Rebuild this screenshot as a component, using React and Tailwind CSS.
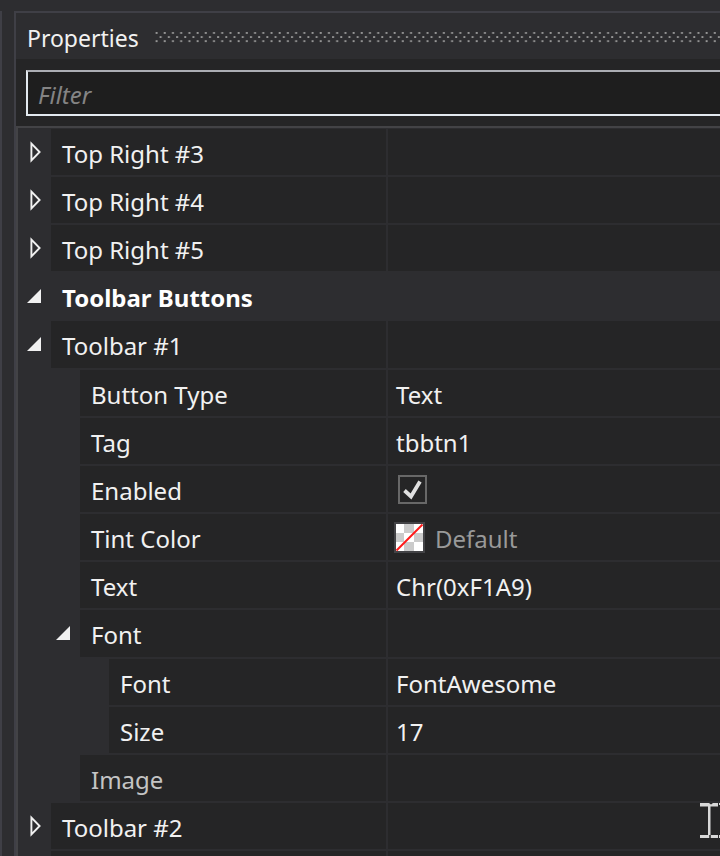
import React, { useState } from "react";
import clsx from "clsx";

const rows = [
  { id: "tr3", label: "Top Right #3", level: 0, state: "closed" },
  { id: "tr4", label: "Top Right #4", level: 0, state: "closed" },
  { id: "tr5", label: "Top Right #5", level: 0, state: "closed" },
  { id: "buttons", label: "Toolbar Buttons", level: 0, state: "open", group: true },
  { id: "tb1", label: "Toolbar #1", level: 0, state: "open" },
  { id: "type", label: "Button Type", level: 1, value: "Text" },
  { id: "tag", label: "Tag", level: 1, value: "tbbtn1" },
  { id: "enabled", label: "Enabled", level: 1, kind: "check" },
  { id: "tint", label: "Tint Color", level: 1, kind: "color", value: "Default" },
  { id: "text", label: "Text", level: 1, value: "Chr(0xF1A9)" },
  { id: "font", label: "Font", level: 1, state: "open" },
  { id: "family", label: "Font", level: 2, value: "FontAwesome" },
  { id: "size", label: "Size", level: 2, value: "17" },
  { id: "image", label: "Image", level: 1, muted: true },
  { id: "tb2", label: "Toolbar #2", level: 0, state: "closed" },
  { id: "tb3", label: "", level: 0 },
];

// width of the gutter in front of the label, one per tree level
const gutters = ["w-[33px]", "w-[62px]", "w-[91px]"];

const Arrow = ({ open }) =>
  open ? (
    <svg width="14" height="14" viewBox="0 0 14 14">
      <path d="M14 0V14H0Z" fill="#f1f1f1" />
    </svg>
  ) : (
    <svg width="14" height="22" viewBox="0 0 14 22">
      <path d="M4.4 2.6V19.4L12.6 11Z" fill="none" stroke="#f1f1f1" strokeWidth="1.9" />
    </svg>
  );

const Grip = () => (
  <svg className="h-3 min-w-0 flex-1" aria-hidden="true">
    <defs>
      <pattern id="grip" width="8.21" height="12" patternUnits="userSpaceOnUse">
        <rect x="0.6" y="0" width="1.9" height="1.9" fill="#999" />
        <rect x="4.7" y="4.1" width="1.9" height="1.9" fill="#999" />
        <rect x="0.6" y="8.2" width="1.9" height="1.9" fill="#999" />
      </pattern>
    </defs>
    <rect width="100%" height="12" fill="url(#grip)" />
  </svg>
);

const Swatch = () => (
  <svg width="31" height="31" viewBox="0 0 31 31" aria-hidden="true">
    <rect width="31" height="31" fill="#434346" />
    <rect x="2" y="2" width="27" height="27" fill="#fff" />
    <path d="M10 2h10v9H10zM2 11h8v9H2zM20 11h9v9h-9zM10 20h10v9H10z" fill="#cbcbcb" />
    <path d="M2.5 28.5L28.5 2.5" stroke="#ff1a1a" strokeWidth="2" />
  </svg>
);

const CheckBox = ({ id }) => {
  const [checked, setChecked] = useState(true);
  return (
    <span className="ml-0.5 grid">
      <input
        id={id}
        type="checkbox"
        checked={checked}
        onChange={(e) => setChecked(e.target.checked)}
        className="col-start-1 row-start-1 size-[29px] appearance-none border-2 border-[#686868] bg-[#252526]"
      />
      {checked && (
        <svg
          width="29"
          height="29"
          viewBox="0 0 29 29"
          className="pointer-events-none col-start-1 row-start-1"
        >
          <path d="M6.5 15.5L13 21.5L22 6.5" fill="none" stroke="#e0e0e0" strokeWidth="3.8" />
        </svg>
      )}
    </span>
  );
};

const Value = ({ row }) => {
  if (row.kind === "check") return <CheckBox id={row.id} />;
  if (row.kind === "color")
    return (
      <span className="flex items-center gap-2.5 text-[#999]">
        <span className="-ml-0.5">
          <Swatch />
        </span>
        <span className="pt-1">{row.value}</span>
      </span>
    );
  return <span>{row.value}</span>;
};

const Row = ({ row }) => {
  const Label = row.kind === "check" ? "label" : "span";
  const open = row.state === "open";
  return (
    <div role="row" className={clsx("flex", open && !row.group ? "h-[49px]" : "h-12")}>
      <div role="rowheader" className="flex w-[370px] shrink-0">
        <div className={clsx("flex shrink-0 justify-end pr-2.5", gutters[row.level])}>
          {row.state && (
            <button
              type="button"
              aria-label={row.label}
              aria-expanded={open}
              className={clsx("flex w-3.5 items-start", open ? "pt-4" : "pt-3")}
            >
              <Arrow open={open} />
            </button>
          )}
        </div>
        <div
          className={clsx(
            "flex min-w-0 flex-1 items-center border-b-2 border-[#2d2d30] pt-[3px] pl-[11px] whitespace-nowrap",
            row.group ? "font-bold text-white" : "border-r-2 bg-[#252526]",
            row.muted && "text-[#c4c4c4]"
          )}
        >
          <Label htmlFor={row.kind === "check" ? row.id : undefined}>{row.label}</Label>
        </div>
      </div>
      <div
        role="gridcell"
        className={clsx(
          "flex min-w-0 flex-1 items-center border-b-2 border-[#2d2d30] pl-2",
          !row.group && "bg-[#252526]",
          !row.kind && "pt-[3px]"
        )}
      >
        <Value row={row} />
      </div>
    </div>
  );
};

const TextCursor = () => (
  <svg
    className="pointer-events-none absolute top-[802px] right-0"
    width="20"
    height="37"
    viewBox="0 0 20 37"
    aria-hidden="true"
  >
    <path d="M0 1H9L11 2.5L13 1H18V4.5H0ZM8 4H10.5V33H8ZM0 33H18V36H0ZM19 1H20V3H19ZM19 33H20V36H19Z" fill="#d8d8d8" />
    <path d="M10 33V36.5" stroke="#222" strokeWidth="1.5" />
  </svg>
);

const App = () => {
  const [filter, setFilter] = useState("");

  return (
    <div className="relative flex h-screen overflow-hidden bg-[#2d2d30] pt-[11px] font-['Noto_Sans','Open_Sans',sans-serif] text-2xl text-[#f1f1f1]">
      <div className="w-0.5 shrink-0 bg-[#3f3f46]" />
      <section className="ml-3 flex min-w-0 flex-1 flex-col border-t-2 border-l-2 border-[#3f3f46]">
        <header className="flex h-[46px] shrink-0 items-center gap-4 pt-1 pl-[11px]">
          <h1 className="text-[23px]">Properties</h1>
          <Grip />
        </header>

        <div className="flex shrink-0 border-b-2 border-[#434346] bg-[#252526] pt-[11px] pb-2.5 pl-2.5">
          <input
            type="text"
            aria-label="Filter"
            placeholder="Filter"
            value={filter}
            onChange={(e) => setFilter(e.target.value)}
            className="h-[46px] min-w-0 flex-1 border-2 border-r-0 border-[#e3e9ef] border-t-[#abadb3] bg-[#1e1e1e] pt-0.5 pl-2.5 outline-none placeholder:text-[#848484] placeholder:italic"
          />
        </div>

        <div role="treegrid" aria-label="Properties" className="border-l-2 border-[#434346] pt-px">
          {rows.map((row) => (
            <Row key={row.id} row={row} />
          ))}
        </div>
      </section>
      <TextCursor />
    </div>
  );
};

export default App;
